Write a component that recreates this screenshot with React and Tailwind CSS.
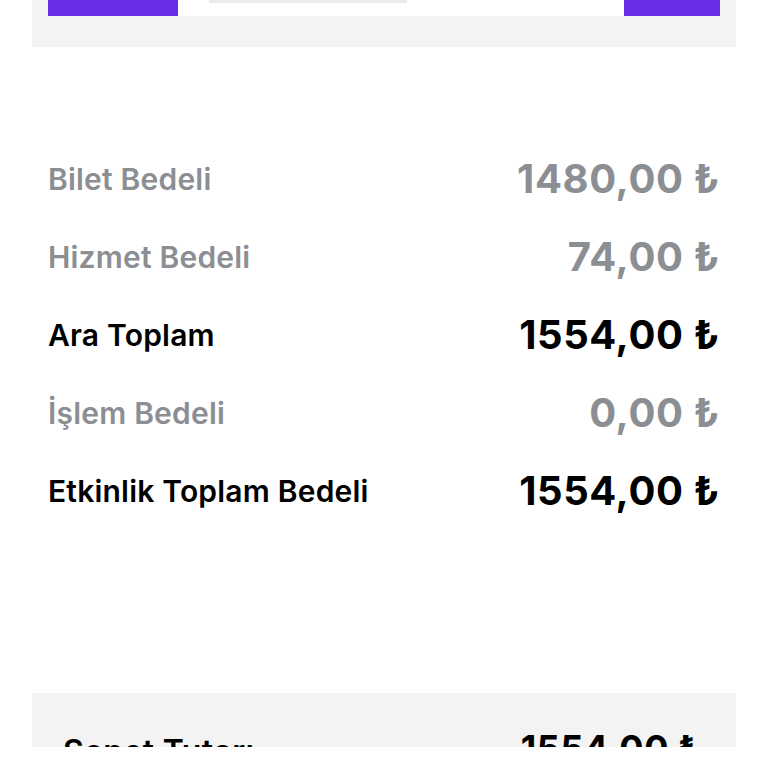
const rows = [
  { label: 'Bilet Bedeli', value: '1480,00 ₺', strong: false },
  { label: 'Hizmet Bedeli', value: '74,00 ₺', strong: false },
  { label: 'Ara Toplam', value: '1554,00 ₺', strong: true },
  { label: 'İşlem Bedeli', value: '0,00 ₺', strong: false },
  { label: 'Etkinlik Toplam Bedeli', value: '1554,00 ₺', strong: true },
];

export default function App() {
  return (
    <div className="w-[768px] h-[768px] overflow-hidden bg-white font-['Inter','Noto_Sans',sans-serif]">
      {/* adet seçici */}
      <div className="mx-8 bg-[#f3f3f3] px-4 pb-[31px]">
        <div className="flex h-4">
          <div className="w-[130px] bg-[#6b2ee8]" />
          <div className="flex-1 bg-white pl-[31px]">
            <div className="h-[3px] w-[198px] bg-[#ececec]" />
          </div>
          <div className="w-24 bg-[#6b2ee8]" />
        </div>
      </div>

      <div className="mt-[93px] px-12">
        {rows.map((r, i) => (
          <div key={i} className="flex h-[78px] items-center justify-between">
            <span className={`text-[30px] font-semibold tracking-[0.2px] ${r.strong ? 'text-black' : 'text-[#8b8e92]'}`}>{r.label}</span>
            <span className={`text-[40px] font-bold tracking-[0.6px] ${r.strong ? 'text-black' : 'text-[#8b8e92]'}`}>{r.value}</span>
          </div>
        ))}
      </div>

      {/* sepet tutarı */}
      <div className="mx-8 mt-[163px] h-[54px] overflow-hidden bg-[#f3f3f3] pl-[31px] pr-[34px] pt-[43px]">
        <div className="flex items-start justify-between leading-none">
          <span className="text-[32px] font-semibold tracking-[0.3px] text-black">Sepet Tutarı</span>
          <span className="-mt-[6px] text-[36px] font-bold tracking-[0.6px] text-black">1554,00 ₺</span>
        </div>
      </div>
    </div>
  );
}
